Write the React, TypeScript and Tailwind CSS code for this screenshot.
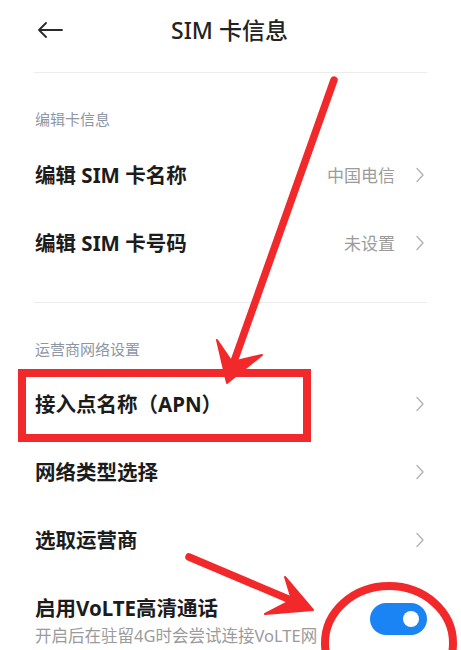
import React from "react";

const font = { fontFamily: '"Noto Sans", "Noto Sans CJK SC", sans-serif' };

function Chevron() {
  return (
    <svg width="10" height="16" viewBox="0 0 10 16" className="ml-[20px] shrink-0">
      <polyline points="2,1.5 8,8 2,14.5" fill="none" stroke="#b3b3b3" strokeWidth="1.4" strokeLinecap="round" strokeLinejoin="round" />
    </svg>
  );
}

function Row({ title, value }: { title: string; value?: string }) {
  return (
    <div className="h-[68px] flex items-center pl-[35px] pr-[36px]">
      <div className="flex-1 text-[20.5px] font-bold text-[#1c1c1c] leading-none">{title}</div>
      {value && <div className="text-[17px] text-[#9b9b9b] leading-none">{value}</div>}
      <Chevron />
    </div>
  );
}

function SectionHeader({ text }: { text: string }) {
  return <div className="pl-[35px] text-[15px] leading-[20px] text-[#8e96a4]">{text}</div>;
}

export default function App() {
  return (
    <div className="relative w-[461px] h-[650px] bg-white overflow-hidden" style={font}>
      <div className="h-[60px] flex items-center relative">
        <svg width="26" height="16" viewBox="0 0 26 16" className="absolute left-[37px] top-[22px]">
          <path d="M25 8H2M9 1L2 8l7 7" fill="none" stroke="#2a2a2a" strokeWidth="1.8" strokeLinecap="round" strokeLinejoin="round" />
        </svg>
        <div className="w-full text-center text-[23px] font-medium text-[#222] leading-none pr-[2px]">SIM 卡信息</div>
      </div>
      <div className="h-[12px]" />
      <div className="mx-[34px] h-px bg-[#ececec]" />
      <div className="h-[36px]" />
      <SectionHeader text="编辑卡信息" />
      <div className="h-[12px]" />
      <Row title="编辑 SIM 卡名称" value="中国电信" />
      <Row title="编辑 SIM 卡号码" value="未设置" />
      <div className="h-[25px]" />
      <div className="mx-[34px] h-px bg-[#ececec]" />
      <div className="h-[36px]" />
      <SectionHeader text="运营商网络设置" />
      <div className="h-[11px]" />
      <Row title="接入点名称（APN）" />
      <Row title="网络类型选择" />
      <Row title="选取运营商" />
      <div className="flex items-start pl-[35px] pt-[24px]">
        <div className="flex-1 min-w-0">
          <div className="text-[20.5px] font-bold text-[#1c1c1c] leading-none whitespace-nowrap">启用VoLTE高清通话</div>
          <div className="mt-[9px] text-[16.5px] text-[#9b9b9b] leading-none whitespace-nowrap">开启后在驻留4G时会尝试连接VoLTE网</div>
        </div>
        <div className="mt-[5px] mr-[34px] w-[57px] h-[32px] rounded-full bg-[#1b84f4] flex items-center justify-end pr-[8px] shrink-0">
          <div className="w-[16px] h-[16px] rounded-full bg-white" />
        </div>
      </div>

      <svg className="absolute inset-0 pointer-events-none" width="461" height="650" viewBox="0 0 461 650">
        <g stroke="#f2292b" fill="#f2292b" strokeLinecap="round" strokeLinejoin="round">
          <line x1="334" y1="80" x2="231" y2="370" strokeWidth="7.5" />
          <polygon points="227,383 217,340 232,362 262,355" strokeWidth="2" />
          <rect x="22" y="373" width="285" height="65" fill="none" strokeWidth="8" strokeLinejoin="miter" strokeLinecap="butt" />
          <line x1="189" y1="557" x2="300" y2="604" strokeWidth="7.5" />
          <polygon points="313,610 285,577 292,600 265,614" strokeWidth="2" />
          <ellipse cx="389" cy="643" rx="64" ry="57" fill="none" strokeWidth="8" />
        </g>
      </svg>
    </div>
  );
}
